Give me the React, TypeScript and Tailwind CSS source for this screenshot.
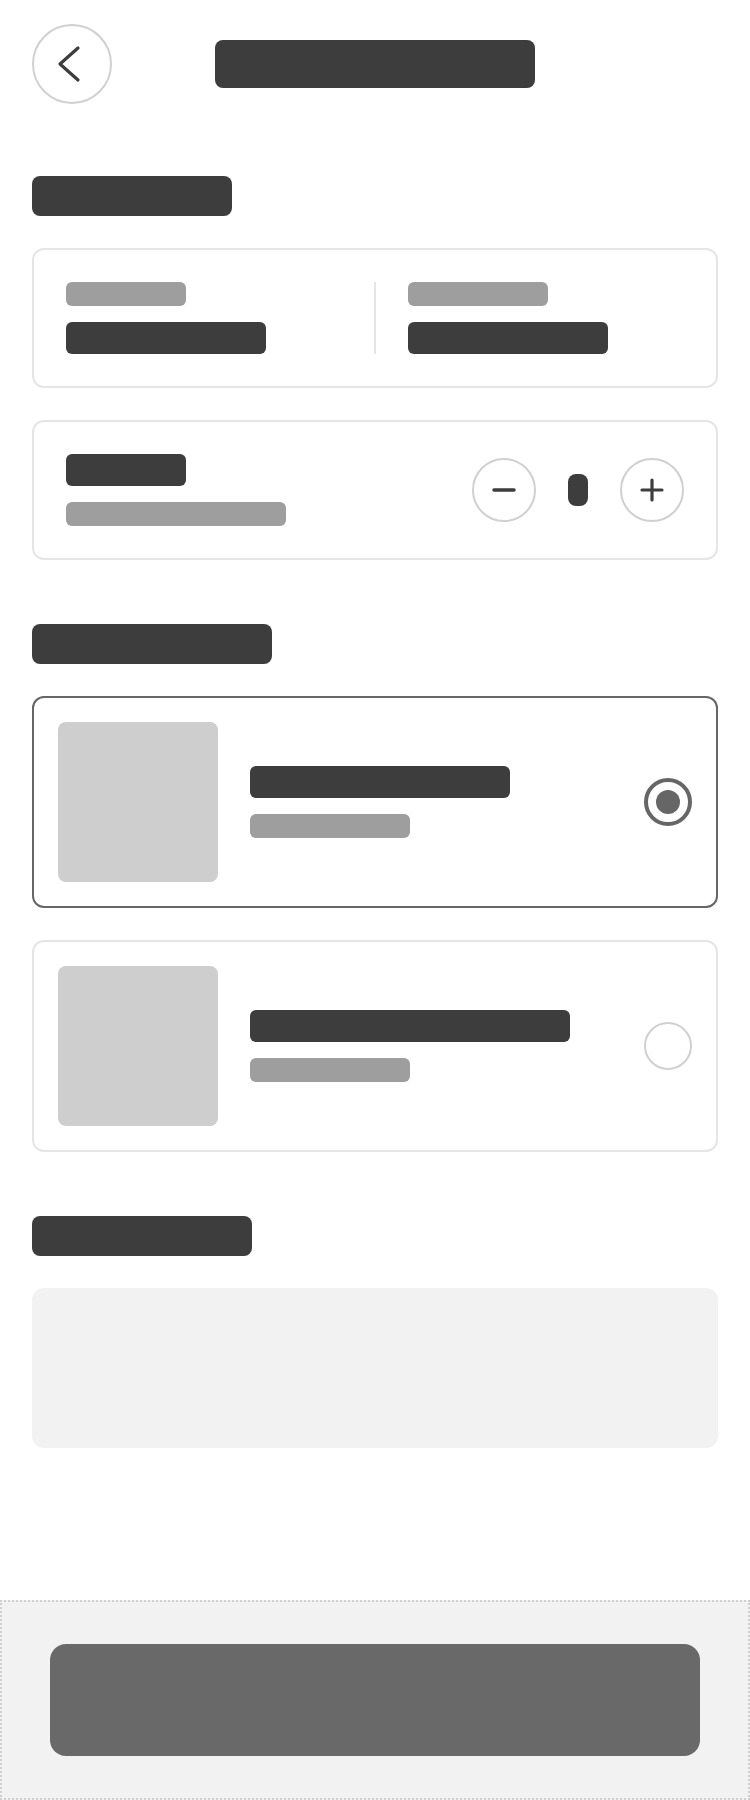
import { useState } from 'react';

const dark = 'bg-[#3d3d3d]';
const light = 'bg-[#9e9e9e]';

function Bar({ className }: { className: string }) {
  return <div className={`rounded-[6px] ${className}`} />;
}

function RoundButton({ children }: { children: React.ReactNode }) {
  return (
    <button className="w-16 h-16 rounded-full border-2 border-[#d0d0d0] flex items-center justify-center bg-white">
      {children}
    </button>
  );
}

const options = [
  { id: 0, title: 'w-[260px]' },
  { id: 1, title: 'w-[320px]' },
];

export default function App() {
  const [selected, setSelected] = useState(0);
  const [count] = useState(1);

  return (
    <div className="min-h-screen w-full bg-white flex flex-col font-['Liberation_Sans',sans-serif]">
      <div className="px-8 flex-1">
        {/* ヘッダー */}
        <header className="h-[128px] pt-6 flex items-start">
          <button className="w-20 h-20 rounded-full border-2 border-[#d0d0d0] flex items-center justify-center shrink-0">
            <svg width="40" height="40" viewBox="0 0 40 40" fill="none">
              <path d="M26 4 L8 20 L26 36" stroke="#3d3d3d" strokeWidth="3.2" strokeLinecap="round" strokeLinejoin="round" />
            </svg>
          </button>
          <div className="mt-4 ml-[103px]">
            <Bar className={`w-[320px] h-12 rounded-[8px] ${dark}`} />
          </div>
        </header>

        {/* 1. 基本情報 */}
        <section className="pt-12">
          <Bar className={`w-[200px] h-10 rounded-[8px] ${dark}`} />

          <div className="mt-8 h-[140px] border-2 border-[#e5e5e5] rounded-[12px] p-8 flex">
            <div className="flex-1 flex flex-col gap-4">
              <Bar className={`w-[120px] h-6 ${light}`} />
              <Bar className={`w-[200px] h-8 ${dark}`} />
            </div>
            <div className="w-[2px] bg-[#e5e5e5] mx-8" />
            <div className="flex-1 flex flex-col gap-4">
              <Bar className={`w-[140px] h-6 ${light}`} />
              <Bar className={`w-[200px] h-8 ${dark}`} />
            </div>
          </div>

          <div className="mt-8 h-[140px] border-2 border-[#e5e5e5] rounded-[12px] px-8 flex items-center justify-between">
            <div className="flex flex-col gap-4">
              <Bar className={`w-[120px] h-8 ${dark}`} />
              <Bar className={`w-[220px] h-6 ${light}`} />
            </div>
            <div className="flex items-center gap-8">
              <RoundButton>
                <svg width="24" height="24" viewBox="0 0 24 24" fill="none">
                  <path d="M2 12 H22" stroke="#3d3d3d" strokeWidth="3.5" strokeLinecap="round" />
                </svg>
              </RoundButton>
              <div className={`w-5 h-8 rounded-[8px] ${dark}`} data-count={count} />
              <RoundButton>
                <svg width="24" height="24" viewBox="0 0 24 24" fill="none">
                  <path d="M2 12 H22 M12 2 V22" stroke="#3d3d3d" strokeWidth="3.2" strokeLinecap="round" />
                </svg>
              </RoundButton>
            </div>
          </div>
        </section>

        {/* 2. 選択肢 */}
        <section className="pt-16">
          <Bar className={`w-[240px] h-10 rounded-[8px] ${dark}`} />
          <div className="mt-8 flex flex-col gap-8">
            {options.map((o) => {
              const active = o.id === selected;
              return (
                <div
                  key={o.id}
                  onClick={() => setSelected(o.id)}
                  className={`border-2 rounded-[12px] p-6 flex items-center ${active ? 'border-[#666666]' : 'border-[#e5e5e5]'}`}
                >
                  <div className="w-40 h-40 rounded-[8px] bg-[#cecece] shrink-0" />
                  <div className="flex-1 ml-8 flex flex-col gap-4">
                    <Bar className={`${o.title} h-8 ${dark}`} />
                    <Bar className={`w-40 h-6 ${light}`} />
                  </div>
                  {active ? (
                    <div className="w-12 h-12 rounded-full border-4 border-[#666666] flex items-center justify-center">
                      <div className="w-6 h-6 rounded-full bg-[#666666]" />
                    </div>
                  ) : (
                    <div className="w-12 h-12 rounded-full border-2 border-[#d0d0d0]" />
                  )}
                </div>
              );
            })}
          </div>
        </section>

        {/* 3. メモ */}
        <section className="pt-16">
          <Bar className={`w-[220px] h-10 rounded-[8px] ${dark}`} />
          <div className="mt-8 h-40 rounded-[12px] bg-[#f2f2f2]" />
        </section>
      </div>

      {/* フッター */}
      <footer className="h-[200px] bg-[#f2f2f2] border-2 border-dotted border-[#d0d0d0] px-12 flex items-center">
        <button className="w-full h-[112px] rounded-[16px] bg-[#696969]" />
      </footer>
    </div>
  );
}
